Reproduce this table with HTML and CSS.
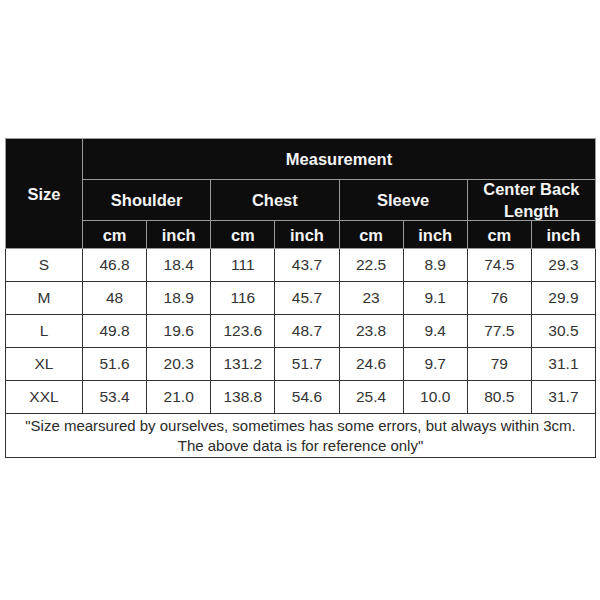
FILE: index.html
```html
<!DOCTYPE html>
<html>
<head>
<meta charset="utf-8">
<link rel="stylesheet" href="styles.css">
</head>
<body>
<table class="chart">
  <colgroup>
    <col class="c-size">
    <col><col><col><col><col><col><col><col>
  </colgroup>
  <thead>
    <tr class="r-top">
      <th rowspan="3" class="size-h">Size</th>
      <th colspan="8">Measurement</th>
    </tr>
    <tr class="r-sub">
      <th colspan="2">Shoulder</th>
      <th colspan="2">Chest</th>
      <th colspan="2">Sleeve</th>
      <th colspan="2"><span class="two">Center Back<br>Length</span></th>
    </tr>
    <tr class="r-unit">
      <th>cm</th><th>inch</th><th>cm</th><th>inch</th><th>cm</th><th>inch</th><th>cm</th><th>inch</th>
    </tr>
  </thead>
  <tbody>
    <tr><td>S</td><td>46.8</td><td>18.4</td><td>111</td><td>43.7</td><td>22.5</td><td>8.9</td><td>74.5</td><td>29.3</td></tr>
    <tr><td>M</td><td>48</td><td>18.9</td><td>116</td><td>45.7</td><td>23</td><td>9.1</td><td>76</td><td>29.9</td></tr>
    <tr><td>L</td><td>49.8</td><td>19.6</td><td>123.6</td><td>48.7</td><td>23.8</td><td>9.4</td><td>77.5</td><td>30.5</td></tr>
    <tr><td>XL</td><td>51.6</td><td>20.3</td><td>131.2</td><td>51.7</td><td>24.6</td><td>9.7</td><td>79</td><td>31.1</td></tr>
    <tr><td>XXL</td><td>53.4</td><td>21.0</td><td>138.8</td><td>54.6</td><td>25.4</td><td>10.0</td><td>80.5</td><td>31.7</td></tr>
    <tr class="r-note"><td colspan="9">"Size mearsured by ourselves, sometimes has some errors, but always within 3cm.<br>The above data is for reference only"</td></tr>
  </tbody>
</table>
</body>
</html>
```
FILE: styles.css
```css
html, body {
  margin: 0;
  background: #ffffff;
}
body {
  padding: 138px 0 0 5px;
  font-family: "Liberation Sans", Arial, sans-serif;
}
.chart {
  width: 591px;
  table-layout: fixed;
  border-collapse: collapse;
}
.c-size {
  width: 77px;
}
.chart th {
  background: #0d0d0d;
  color: #f4f4f4;
  font-weight: bold;
  font-size: 16.5px;
  border: 1px solid #9a9a9a;
  padding: 0;
  text-align: center;
  line-height: 20px;
}
.two {
  display: block;
  line-height: 22px;
  margin: -3px 0 -2px;
}
.r-top {
  height: 41px;
}
.r-sub {
  height: 41px;
}
.r-unit {
  height: 28px;
}
.chart td {
  border: 1px solid #333333;
  color: #333333;
  font-size: 15.5px;
  text-align: center;
  padding: 0;
  height: 32px;
}
.chart .r-note td {
  height: 43px;
  font-size: 15px;
  line-height: 20px;
  color: #2a2a2a;
}
```
